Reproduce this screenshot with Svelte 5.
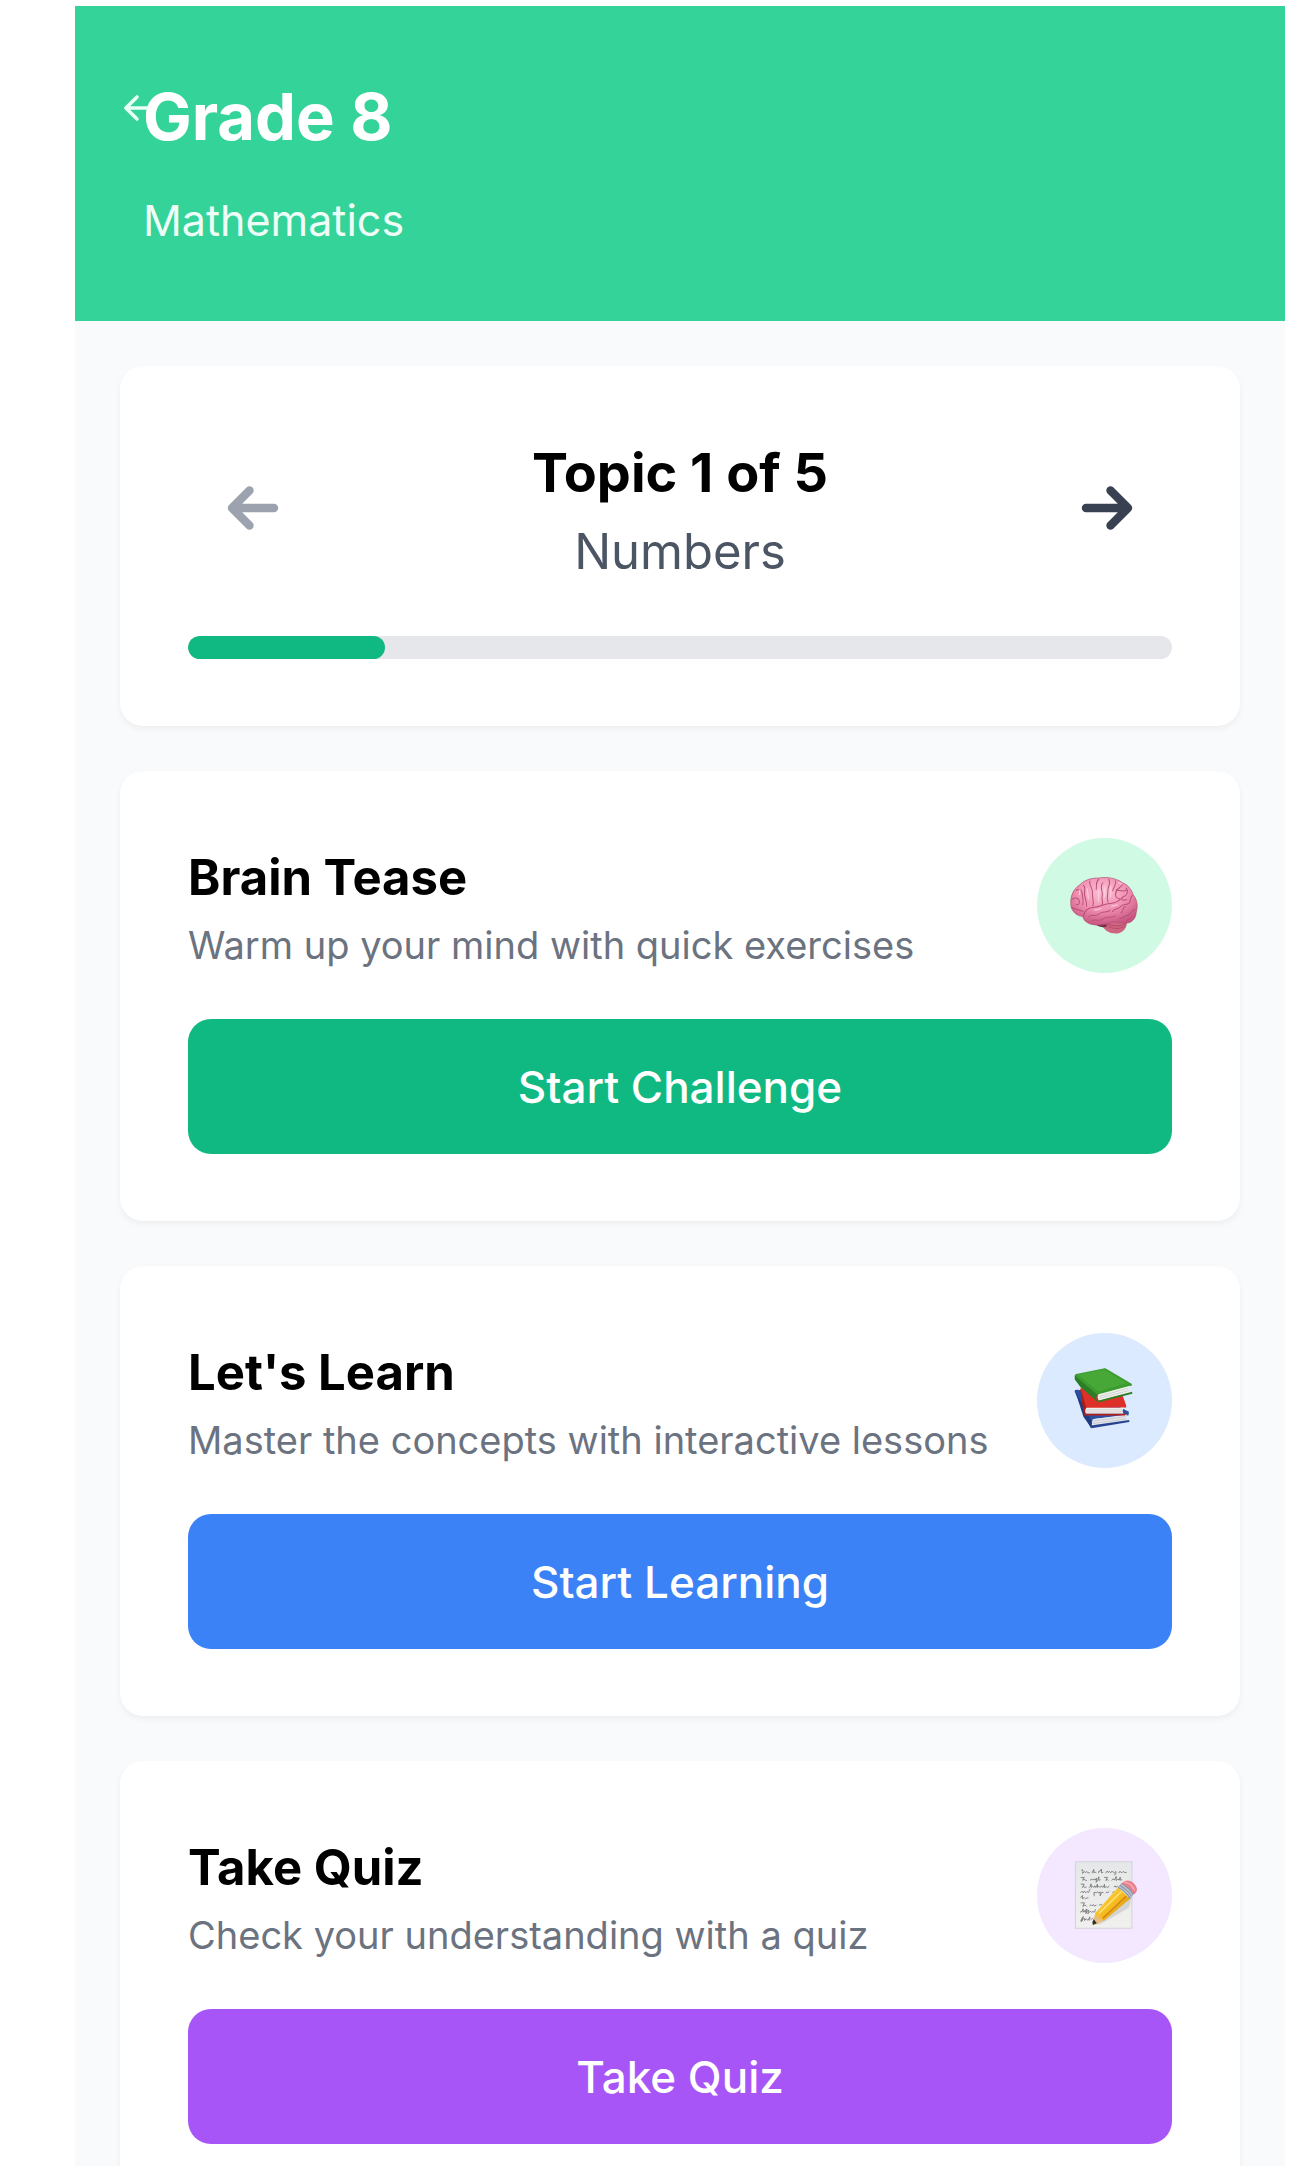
<script>
  const topic = { index: 1, total: 5, name: 'Numbers' };
  const activities = [
    { id: 'brain', title: 'Brain Tease', text: 'Warm up your mind with quick exercises', action: 'Start Challenge' },
    { id: 'learn', title: "Let's Learn", text: 'Master the concepts with interactive lessons', action: 'Start Learning' },
    { id: 'quiz', title: 'Take Quiz', text: 'Check your understanding with a quiz', action: 'Take Quiz' }
  ];
</script>

{#snippet brain()}
  <svg viewBox="23 26 404 404" aria-hidden="true">
    <defs>
      <radialGradient id="brainFill" cx="48%" cy="30%" r="70%">
        <stop offset="0" stop-color="#fcc0d4" />
        <stop offset="0.55" stop-color="#f08fb0" />
        <stop offset="1" stop-color="#c85580" />
      </radialGradient>
    </defs>
    <path d="M216 282C222 302 238 312 258 312C278 311 291 298 292 280L270 266L224 272Z" fill="#cf6481" />
    <path d="M196 284C210 293 224 296 232 290L228 274Z" fill="#6d2f42" />
    <path d="M124 222C123 198 133 178 150 167C164 152 186 145 208 146C232 141 262 147 279 160C298 167 307 184 312 198C324 212 325 232 320 248C319 268 306 281 288 281C272 281 258 274 246 277C230 287 205 289 185 284C169 280 162 270 160 261C142 259 124 246 124 222Z" fill="url(#brainFill)" stroke="#b04a70" stroke-width="2" />
    <g fill="none" stroke="#b8507a" stroke-width="3" stroke-linecap="round">
      <path d="M162 262C162 245 175 234 194 233C214 232 224 222 242 222C258 222 266 216 276 207" />
      <path d="M127 234C137 241 150 239 160 246M128 210C136 203 145 205 149 213C153 221 147 227 141 225M141 183C147 177 157 180 158 190C159 202 163 211 160 226" />
      <path d="M162 168C170 172 164 184 165 196C167 208 173 216 171 230M181 155C178 168 190 174 189 190C187 204 195 216 190 229M208 149C196 160 203 168 200 180M220 160C208 174 222 186 218 200C214 212 223 216 218 226" />
      <path d="M237 150C247 160 234 170 235 184C236 200 229 205 236 218M258 154C263 166 251 172 250 184M279 166C270 178 258 178 258 194C257 204 264 207 270 208M260 181C272 184 282 188 290 182M290 176C298 187 292 198 281 202C272 207 279 216 291 210M309 198C299 204 306 212 299 221C292 228 280 222 273 231C267 240 255 236 249 246" />
      <path d="M178 262C187 251 199 265 211 252C221 242 231 253 242 242M187 274C199 266 211 279 222 267C234 257 244 269 257 259M275 250C284 243 276 235 287 231M270 267C282 266 286 258 294 257C304 255 303 244 316 240M291 276C294 267 302 270 306 263" />
      <path d="M232 283C247 290 273 292 288 283M236 291C252 299 272 299 286 290" stroke="#a8405e" stroke-width="2" />
    </g>
    <g fill="none" stroke="#ffd6e3" stroke-width="4" stroke-linecap="round" opacity="0.7">
      <path d="M173 178L177 208M207 184L207 215M226 173L225 201M244 170L243 201M268 160L276 163M195 242L214 238M247 230L264 226M151 181L150 195" />
    </g>
  </svg>
{/snippet}

{#snippet learn()}
  <svg viewBox="23 26 404 404" aria-hidden="true">
    <path d="M136 202Q134 196 142 196L170 198L298 262L297 272L192 283L184 311Z" fill="#2d4fa0" />
    <path d="M137 199L184 285L186 311L162 277Z" fill="#203b80" />
    <path d="M190 284L292 270Q287 279 293 288L192 304Q185 295 190 284Z" fill="#e6e7ec" />
    <path d="M191 290L288 276M191 297L289 283" stroke="#b6bac9" stroke-width="2" />
    <path d="M184 303L299 286V292L186 311Z" fill="#27458f" />
    <path d="M152 192L176 190L278 210L290 243L290 249L171 251L168 273Z" fill="#dc3028" />
    <path d="M153 192L170 248L166 273L158 239Z" fill="#a51d1c" />
    <path d="M171 250H282Q277 258 282 268H170Q164 259 171 250Z" fill="#f2eeee" />
    <path d="M170 256H278M169 262H279" stroke="#c9c1c1" stroke-width="2" />
    <path d="M165 268H287V273H165Z" fill="#b6211f" />
    <path d="M136 153Q136 149 144 148L222 132Q228 131 234 135L305 177Q309 180 306 184L207 211Q203 213 200 209L137 160Z" fill="#3c9c2f" />
    <path d="M145 151L223 135L292 176L207 201Z" fill="#4cae3c" opacity="0.7" />
    <path d="M136 153L203 211Q197 220 204 232L154 189L136 165Z" fill="#2c7d24" />
    <path d="M207 209L302 184Q297 194 303 203L209 229Q201 218 207 209Z" fill="#eef0ee" />
    <path d="M207 216L298 191M207 222L299 198" stroke="#c0c6bf" stroke-width="2" />
    <path d="M202 226Q206 230 211 227L308 202V208L208 233Q203 233 202 226Z" fill="#2b8124" />
  </svg>
{/snippet}

{#snippet quiz()}
  <svg viewBox="23 26 404 404" aria-hidden="true">
    <defs>
      <linearGradient id="paper" x1="0" y1="0" x2="0" y2="1">
        <stop offset="0" stop-color="#e6e7e8" />
        <stop offset="1" stop-color="#f0f0ee" />
      </linearGradient>
      <linearGradient id="pencil" x1="0" y1="0" x2="1" y2="1">
        <stop offset="0.2" stop-color="#fbd243" />
        <stop offset="0.55" stop-color="#f5b81c" />
        <stop offset="0.8" stop-color="#d88d10" />
      </linearGradient>
    </defs>
    <rect x="138" y="127" width="169" height="199" fill="url(#paper)" stroke="#d3d2da" stroke-width="3" />
    <g fill="none" stroke="#57585c" stroke-width="2" stroke-linecap="round" stroke-linejoin="round">
      <path d="M156 152q8-5 3 10q4-6 7-5q2 5 6-1l3 4h5M188 160l5-10v10q4-6 7 0M207 160q0-8 5-5l4-6v11l4-1M229 160q2-6 6-4q0 6 5 0l4 4q2-7 6-3l5 3 4-4q1 12-4 10M268 160q2-6 5-3l4 3 4-4 4 3h5" />
      <path d="M155 174h10q-5 2-5 9q4-7 7-1l4 1M183 182q2-6 4-3l3 3 4-4 3 4 4-6-1 13 5-9 3-8v11l4-2M225 174h9l-5 9q5-6 8 0M247 182q3-6 6-3l2 3 5-11v12l5-4 4 3 3-9v9l5-1" />
      <path d="M155 194h9l-5 10q4-6 7 0l4-1M179 204q5-1 6-11v11l4-4 4 4 3-5 3 5 5-10v10l4-4 4 4 4-5 4 5 5-9v9l6-2 4 2 4-4M254 201q5-4 5 2l5-3" />
      <path d="M154 219l4-4 3 5 4-5 4 5 4-4 4 3 5-10M194 219v10M194 220q7-5 7 0l4-3 3 4 4-4v12l5-11 4 1M229 220q4-6 6 0l4-4M249 220l4-4 3 4M154 234l5-6v10l5-4 4 4 5-3h3" />
      <path d="M155 250h10l-5 11 7-5 4 4M181 258q5-5 7 1l4-4 3 5 5-3M209 257l5-3 4 3M153 278q6 0 8-10v10l4-5 2 5q1-10 6-9l-4 13q6-12 9-10l-3 11 7-8 4 3 5-2 4 2 3-8" />
      <path d="M154 304q5-14 8-13l-6 15 7-10 5 3-4 3 7-3 5 3 5-10v10M186 299q4-5 6-1" />
    </g>
    <path d="M206 318L298 265L307 232L278 246Z" fill="#b5b3b5" opacity="0.45" />
    <path d="M190 315Q187 305 192 298L198 279L222 303L206 313Z" fill="#e8bd80" />
    <path d="M190 316Q187 306 193 299L202 311Z" fill="#303032" />
    <path d="M197 281L266 203L301 238L225 302Q217 306 217 297Q209 300 208 290Q199 291 197 281Z" fill="url(#pencil)" />
    <path d="M208 282L276 216" stroke="#ffe67b" stroke-width="4" />
    <path d="M220 296L290 230" stroke="#ca8412" stroke-width="4" />
    <path d="M264 205L277 190Q299 200 314 222L300 239Q288 216 264 205Z" fill="#8e9aab" />
    <path d="M269 202Q291 212 304 233M274 196Q296 207 308 228" fill="none" stroke="#c6ced8" stroke-width="3" />
    <path d="M276 192Q285 181 299 184Q316 189 322 207Q323 217 313 225Q302 202 276 192Z" fill="#ea7f8c" />
    <path d="M285 188Q304 191 315 211" fill="none" stroke="#f7a7af" stroke-width="5" stroke-linecap="round" />
  </svg>
{/snippet}

<div class="page">
  <header>
    <button class="back" aria-label="Back">
      <svg viewBox="0 0 24 24" aria-hidden="true"><path d="M12 19l-7-7 7-7M5 12h14" /></svg>
    </button>
    <h1>Grade 8</h1>
    <p>Mathematics</p>
  </header>

  <main>
    <section class="card">
      <div class="topic">
        <button class="step" aria-label="Previous topic" disabled>
          <svg viewBox="0 0 24 24" aria-hidden="true"><path d="M11 17l-5-5 5-5M6 12h12" /></svg>
        </button>
        <div class="topic-text">
          <h2>Topic {topic.index} of {topic.total}</h2>
          <p>{topic.name}</p>
        </div>
        <button class="step" aria-label="Next topic">
          <svg viewBox="0 0 24 24" aria-hidden="true"><path d="M13 7l5 5-5 5M18 12H6" /></svg>
        </button>
      </div>
      <div class="track" role="progressbar" aria-label="Topic progress" aria-valuenow={topic.index} aria-valuemin="0" aria-valuemax={topic.total}>
        <div class="fill" style="width: {(topic.index / topic.total) * 100}%"></div>
      </div>
    </section>

    {#each activities as item (item.id)}
      <section class="card {item.id}">
        <div class="info">
          <div>
            <h3>{item.title}</h3>
            <p>{item.text}</p>
          </div>
          <div class="badge">
            {#if item.id === 'brain'}{@render brain()}{:else if item.id === 'learn'}{@render learn()}{:else}{@render quiz()}{/if}
          </div>
        </div>
        <button class="action">{item.action}</button>
      </section>
    {/each}
  </main>
</div>

<style>
  :global(body) {
    margin: 0;
    background: #fff;
  }
  .page {
    margin: 6px 5px 0 75px;
    background: #f9fafb;
    font-family: Inter, 'Liberation Sans', sans-serif;
    color: #000;
  }
  h1, h2, h3, p {
    margin: 0;
  }
  button {
    border: 0;
    padding: 0;
    background: none;
    font: inherit;
    cursor: pointer;
  }
  svg {
    display: block;
  }
  header {
    position: relative;
    padding: 66px 68px 67px;
    background: #34d399;
    color: #fff;
  }
  .back {
    position: absolute;
    left: 43px;
    top: 83px;
  }
  .back svg {
    width: 38px;
    height: 38px;
    fill: none;
    stroke: #e9fff6;
    stroke-width: 2.3;
    stroke-linecap: round;
    stroke-linejoin: round;
  }
  h1 {
    position: relative;
    font-size: 65px;
    line-height: 90px;
    font-weight: 700;
  }
  header p {
    margin-top: 24px;
    font-size: 43px;
    line-height: 68px;
    color: #effdf7;
  }
  main {
    display: flex;
    flex-direction: column;
    gap: 45px;
    padding: 45px;
  }
  .card {
    padding: 67px 68px;
    border-radius: 23px;
    background: #fff;
    box-shadow: 0 3px 6px rgba(0, 0, 0, 0.05);
  }
  .topic {
    display: flex;
    justify-content: space-between;
    align-items: flex-start;
  }
  .step {
    display: grid;
    place-items: center;
    width: 130px;
    height: 150px;
    color: #374151;
  }
  .step:disabled {
    color: #9ca3af;
    cursor: default;
  }
  .step svg {
    width: 84px;
    height: 84px;
    fill: none;
    stroke: currentColor;
    stroke-width: 2.4;
    stroke-linecap: round;
    stroke-linejoin: round;
  }
  .topic-text {
    text-align: center;
  }
  h2 {
    font-size: 54px;
    line-height: 79px;
    font-weight: 650;
  }
  .topic-text p {
    font-size: 49px;
    line-height: 79px;
    color: #4b5563;
  }
  .track {
    height: 23px;
    margin-top: 45px;
    border-radius: 12px;
    background: #e5e7eb;
    overflow: hidden;
  }
  .fill {
    height: 100%;
    border-radius: 12px;
    background: #10b981;
  }
  .info {
    display: flex;
    justify-content: space-between;
    align-items: center;
    margin-bottom: 46px;
  }
  h3 {
    font-size: 49px;
    line-height: 79px;
    font-weight: 650;
  }
  .info p {
    font-size: 38px;
    line-height: 56px;
    color: #6b7280;
  }
  .badge {
    flex: none;
    width: 135px;
    height: 135px;
    border-radius: 50%;
  }
  .brain .badge { background: #d1fae5; }
  .learn .badge { background: #dbeafe; }
  .quiz .badge { background: #f3e8ff; }
  .action {
    display: block;
    width: 100%;
    height: 135px;
    border-radius: 23px;
    color: #fff;
    font-size: 44px;
    font-weight: 450;
  }
  .brain .action { background: #10b981; }
  .learn .action { background: #3b82f6; }
  .quiz .action { background: #a855f7; }
</style>
